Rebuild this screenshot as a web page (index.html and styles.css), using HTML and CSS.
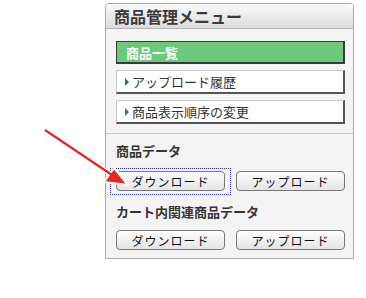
FILE: index.html
```html
<!DOCTYPE html>
<html lang="ja">
<head>
    <meta charset="UTF-8">
    <title>商品管理メニュー</title>
    <link rel="stylesheet" href="styles.css">
</head>
<body>
    <div class="page">
        <div class="panel">
            <div class="panel-header">商品管理メニュー</div>
            <div class="menu">
                <a class="menu-item active">商品一覧</a>
                <a class="menu-item"><span class="tri"></span>アップロード履歴</a>
                <a class="menu-item"><span class="tri"></span>商品表示順序の変更</a>
            </div>
            <div class="data-section">
                <div class="data-title">商品データ</div>
                <div class="btn-row">
                    <button class="btn focused">ダウンロード</button>
                    <button class="btn">アップロード</button>
                </div>
                <div class="data-title">カート内関連商品データ</div>
                <div class="btn-row">
                    <button class="btn">ダウンロード</button>
                    <button class="btn">アップロード</button>
                </div>
            </div>
        </div>
    </div>

    <!-- pointer arrow drawn over the page -->
    <svg class="pointer" width="140" height="200" viewBox="0 0 140 200">
        <line x1="45" y1="130" x2="112" y2="175" stroke="#fff" stroke-width="5"/>
        <polygon points="128,185 104,182 114,168" fill="#e8251f" stroke="#fff" stroke-width="2" stroke-linejoin="round"/>
        <line x1="45" y1="130" x2="112" y2="175" stroke="#e8251f" stroke-width="2.2"/>
    </svg>
</body>
</html>
```

FILE: styles.css
```css
body {
    margin: 0;
    background: #fff;
    font-family: "Noto Sans CJK JP", "DejaVu Sans", sans-serif;
    color: #333;
}
.page {
    padding: 3px 0 0 105px;
}
.panel {
    width: 247px;
    border: 1px solid #a9a9a9;
    border-radius: 4px 4px 0 0;
    background: #f4f4f4;
}
.panel-header {
    height: 24px;
    line-height: 24px;
    padding-left: 8px;
    font-size: 16px;
    font-weight: bold;
    color: #3a3a3a;
    border-bottom: 1px solid #b5b5b5;
    border-radius: 3px 3px 0 0;
    background: linear-gradient(#fafafa, #dcdcdc);
}
.menu {
    display: flex;
    flex-direction: column;
    gap: 6px;
    padding: 12px 8px 9px 10px;
    border-bottom: 1px solid #c8c8c8;
}
.menu-item {
    display: flex;
    align-items: center;
    height: 21px;
    padding-left: 8px;
    font-size: 13px;
    color: #333;
    background: #fff;
    border: 1px solid #c9c9c9;
    border-right: 2px solid #555;
    border-bottom: 2px solid #555;
}
.menu-item.active {
    height: 20px;
    padding-left: 9px;
    color: #fff;
    font-weight: bold;
    background: #6cc87a;
    border: 1px solid #3a3a3a;
    border-right: 2px solid #3a3a3a;
    border-bottom: 2px solid #3a3a3a;
}
.tri {
    width: 0;
    height: 0;
    margin-right: 3px;
    border-top: 4px solid transparent;
    border-bottom: 4px solid transparent;
    border-left: 4px solid #2f6aa8;
}
.data-section {
    padding: 8px 8px 8px 10px;
}
.data-title {
    font-size: 13px;
    font-weight: bold;
    color: #333;
    line-height: 18px;
}
.btn-row {
    display: flex;
    justify-content: space-between;
    margin: 11px 0 12px;
}
.btn-row:last-child {
    margin: 9px 0 0;
}
.btn {
    position: relative;
    display: block;
    width: 109px;
    height: 20px;
    padding: 0;
    font-family: "Noto Sans CJK JP", "DejaVu Sans", sans-serif;
    font-size: 12px;
    letter-spacing: 1px;
    color: #111;
    background: linear-gradient(#fdfdfd, #e4e4e4);
    border: 1px solid #777;
    border-radius: 4px;
}
/* dotted focus ring around the first button */
.btn.focused::after {
    content: "";
    position: absolute;
    top: -4px;
    bottom: -5px;
    left: -7px;
    right: -7px;
    border: 1px dotted #1c2bd8;
}
.pointer {
    position: absolute;
    left: 0;
    top: 0;
}
```
